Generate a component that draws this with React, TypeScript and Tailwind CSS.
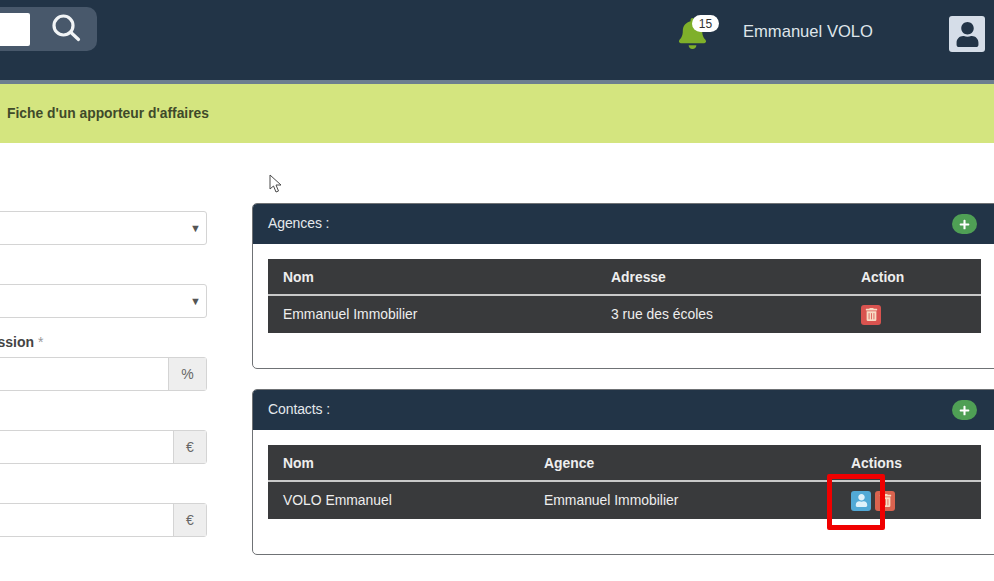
import React from "react";
import { FaBell, FaUser, FaTrashAlt, FaPlus } from "react-icons/fa";

function SelectField() {
  return (
    <div className="h-[73px] pt-[17px]">
      <div className="flex h-[34px] items-center justify-end rounded-[3px] border border-[#d4d4d4] bg-white pr-[5px] text-[11px] text-[#555]">
        ▼
      </div>
    </div>
  );
}

function AddonField({ addon, addonW }: { addon: string; addonW: string }) {
  return (
    <div className="h-[73px] pt-[17px]">
      <div className="flex h-[34px] rounded-[3px] border border-[#d4d4d4] bg-white">
        <div className="flex-1" />
        <div className={`flex items-center justify-center border-l border-[#d4d4d4] bg-[#eeeeee] text-[14px] text-[#666] ${addonW}`}>
          {addon}
        </div>
      </div>
    </div>
  );
}

function Panel({ title, children }: { title: string; children: React.ReactNode }) {
  return (
    <section className="h-[166px] overflow-hidden rounded-[5px] border border-[#6f7275] bg-white">
      <div className="flex h-[40px] items-center justify-between bg-[#223447] pr-[34px] pl-[15px]">
        <span className="mt-[-1px] text-[14px] tracking-[-0.1px] text-[#e4e8ec]">{title}</span>
        <span className="flex h-[20px] w-[25px] items-center justify-center rounded-full bg-[#4f9f55] text-white">
          <FaPlus size={11} />
        </span>
      </div>
      <div className="pt-[15px] pl-[15px]">{children}</div>
    </section>
  );
}

function IconBtn({ bg, children }: { bg: string; children: React.ReactNode }) {
  return <span className={`inline-flex h-[20px] w-[20px] items-center justify-center rounded-[3px] ${bg}`}>{children}</span>;
}

function DataTable({ widths, head, row, actions }: { widths: string[]; head: string[]; row: string[]; actions: React.ReactNode }) {
  const cols = widths.join(" ");
  return (
    <div className="w-[713px] bg-[#393a3c] text-[13.9px] text-[#eeeeee]">
      <div className="grid h-[37px] items-center border-b-2 border-[#c9c9c9] pt-[1px] font-bold" style={{ gridTemplateColumns: cols }}>
        {head.map((h) => (
          <div key={h} className="pl-[15px]">{h}</div>
        ))}
      </div>
      <div className="grid h-[37px] items-center" style={{ gridTemplateColumns: cols }}>
        {row.map((c) => (
          <div key={c} className="pl-[15px]">{c}</div>
        ))}
        <div className="flex gap-[4px] pl-[15px]">{actions}</div>
      </div>
    </div>
  );
}

export default function App() {
  return (
    <div className="relative h-[581px] w-[994px] overflow-hidden bg-white font-['Liberation_Sans',Arial,sans-serif]">
      <header className="flex h-[84px] items-start border-b-[4px] border-[#6c7e8f] bg-[#223447]">
        <div className="mt-[7px] flex h-[44px] w-[97px] items-center rounded-r-[10px] bg-[#48586b]">
          <div className="h-[33px] w-[30px] rounded-r-[2px] bg-white" />
          <svg className="ml-[21px]" width="30" height="30" viewBox="0 0 30 30" fill="none" stroke="#f1f4f6" strokeWidth="3.2" strokeLinecap="round">
            <circle cx="12.5" cy="11.5" r="9.5" />
            <path d="M20 18.5 L27.5 25.5" />
          </svg>
        </div>
        <div className="ml-auto flex h-full items-start">
          <div className="relative mt-[16px] h-[34px] w-[42px]">
            <FaBell className="absolute top-[2px] left-0 text-[#7fb02a]" size={31} />
            <span className="absolute top-[-1px] left-[15px] flex h-[17px] w-[27px] items-center justify-center rounded-full bg-white text-[12px] text-[#333]">15</span>
          </div>
          <span className="mt-[21px] ml-[24px] text-[16.6px] leading-[22px] text-[#dfe5ea]">Emmanuel VOLO</span>
          <div className="mt-[16px] mr-[9px] ml-[76px] flex h-[36px] w-[36px] items-end justify-center overflow-hidden rounded-[3px] bg-[#d5dde8] pb-[5px] text-[#223447]">
            <FaUser size={25} />
          </div>
        </div>
      </header>

      <div className="flex h-[59px] items-center bg-[#d4e57f] pl-[7px] text-[13.85px] font-bold text-[#3f4a2a]">
        Fiche d'un apporteur d'affaires
      </div>

      <main className="flex">
        <div className="ml-[-60px] w-[267px] shrink-0 pt-[51px]">
          <SelectField />
          <SelectField />
          <div className="h-[73px]">
            <div className="h-[17px] pl-[10px] text-[14px] leading-[5px] whitespace-nowrap text-[#444]">
              <b>Commission</b> <span className="text-[#999]">*</span>
            </div>
            <div className="flex h-[34px] rounded-[3px] border border-[#d4d4d4] bg-white">
              <div className="flex-1" />
              <div className="flex w-[38px] items-center justify-center border-l border-[#d4d4d4] bg-[#eeeeee] text-[14px] text-[#666]">%</div>
            </div>
          </div>
          <AddonField addon="€" addonW="w-[33px]" />
          <AddonField addon="€" addonW="w-[33px]" />
        </div>
        <div className="ml-[45px] flex w-[760px] shrink-0 flex-col gap-[20px] pt-[60px]">
          <Panel title="Agences :">
            <DataTable
              widths={["328px", "250px", "135px"]}
              head={["Nom", "Adresse", "Action"]}
              row={["Emmanuel Immobilier", "3 rue des écoles"]}
              actions={
                <IconBtn bg="bg-[#d9534f]">
                  <FaTrashAlt size={13} className="text-[#f7dcc4]" />
                </IconBtn>
              }
            />
          </Panel>
          <Panel title="Contacts :">
            <DataTable
              widths={["261px", "307px", "145px"]}
              head={["Nom", "Agence", "Actions"]}
              row={["VOLO Emmanuel", "Emmanuel Immobilier"]}
              actions={
                <>
                  <IconBtn bg="bg-[#52a9d6]">
                    <FaUser size={13} className="text-[#dff1fa]" />
                  </IconBtn>
                  <IconBtn bg="bg-[#d9634f]">
                    <FaTrashAlt size={13} className="text-[#f7dcc4]" />
                  </IconBtn>
                </>
              }
            />
          </Panel>
        </div>
      </main>

      {/* cursor */}
      <svg className="absolute top-[174px] left-[269px]" width="13" height="20" viewBox="0 0 13 20" fill="white" stroke="#4a4a4a" strokeWidth="1">
        <path d="M1 1 L1 15 L4.5 12 L7 18 L9.5 17 L7 11 L12 11 Z" />
      </svg>
      {/* red highlight */}
      <div className="absolute top-[474px] left-[827px] h-[56px] w-[58px] rounded-[2px] border-[5px] border-[#f00000]" />
    </div>
  );
}
